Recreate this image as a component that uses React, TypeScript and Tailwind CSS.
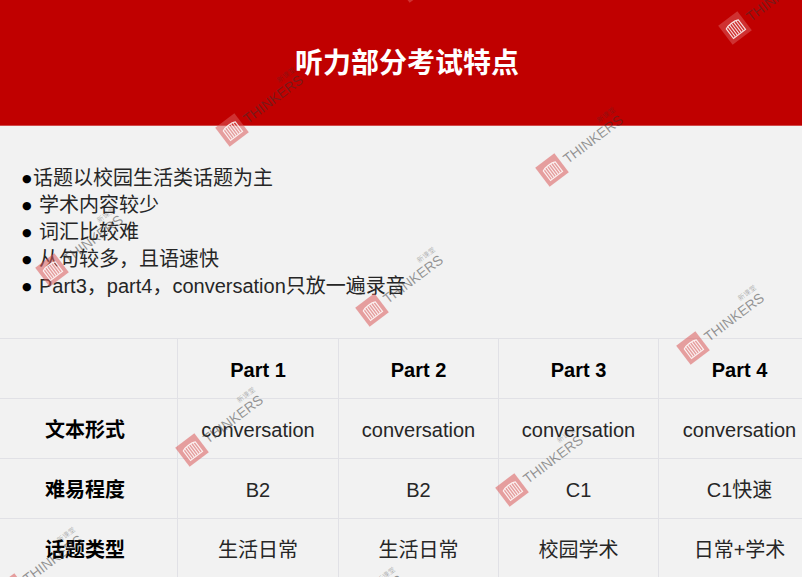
const FONT = "font-['Liberation_Sans','Noto_Sans_CJK_SC',sans-serif]";

const bullets = [
  { text: "话题以校园生活类话题为主", gap: "w-[11px]" },
  { text: "学术内容较少", gap: "w-[17px]" },
  { text: "词汇比较难", gap: "w-[17px]" },
  { text: "从句较多，且语速快", gap: "w-[17px]" },
  { text: "Part3，part4，conversation只放一遍录音", gap: "w-[17px]" },
];

const rows = [
  { label: "", cells: ["Part 1", "Part 2", "Part 3", "Part 4"], head: true },
  { label: "文本形式", cells: ["conversation", "conversation", "conversation", "conversation"] },
  { label: "难易程度", cells: ["B2", "B2", "C1", "C1快速"] },
  { label: "话题类型", cells: ["生活日常", "生活日常", "校园学术", "日常+学术"] },
];

// logo centres of the repeated watermark
const marks = [
  [412, -14], [735, 28], [232, 130], [552, 170], [52, 270],
  [372, 310], [693, 348], [192, 450], [512, 490], [12, 590], [332, 630],
];

function Watermark({ x, y }: { x: number; y: number }) {
  return (
    <div
      className="absolute flex items-center gap-[4px] origin-[12px_12px] rotate-[-37deg]"
      style={{ left: x - 12, top: y - 12 }}
    >
      <div className="h-6 w-6 shrink-0 bg-[rgba(218,90,90,0.55)]">
        <svg viewBox="0 0 24 24" className="h-6 w-6" fill="none" stroke="rgba(255,255,255,0.85)">
          <path d="M4.5 19.5V7.5C8 5.5 16 5.5 19.5 7.5V19.5H4.5Z" strokeWidth="1.2" />
          <path d="M7 7V19M9.5 6.5V19M12 6V19M14.5 6.5V19M17 7V19" strokeWidth="1" />
        </svg>
      </div>
      <div className="relative font-['Liberation_Sans',sans-serif] text-[14px] font-light leading-none text-[rgba(50,50,50,0.5)] whitespace-nowrap">
        THINKERS
        <span className="absolute right-0 top-[-8px] font-['Noto_Sans_CJK_SC',sans-serif] text-[7px] leading-none">
          新课堂
        </span>
      </div>
    </div>
  );
}

export default function App() {
  return (
    <div className={`relative h-[577px] w-[802px] overflow-hidden bg-[#f2f2f2] text-[#262626] ${FONT}`}>
      <header className="flex h-[126px] items-center justify-center border-b border-[#d04a4a] bg-[#c00000] pl-[12px] pt-[2px]">
        <h1 className="text-[28px] font-bold leading-none text-white">听力部分考试特点</h1>
      </header>

      <ul className="ml-[22px] mt-[39px] text-[20px] leading-[27px]">
        {bullets.map((item) => (
          <li key={item.text} className="flex items-center whitespace-nowrap">
            <span className={`${item.gap} shrink-0 font-['DejaVu_Sans',sans-serif] text-[11px] leading-none text-black`}>●</span>
            {item.text}
          </li>
        ))}
      </ul>

      <div className="-ml-[7px] mt-[38px] grid w-[827px] grid-cols-[184px_161px_160px_160px_162px] text-[20px]">
        {rows.map((row) => (
          <div key={row.label || "head"} className="contents">
            <div className="flex h-[60px] items-center justify-center border-t border-[#e1e1e6] pt-[3px] font-bold text-black">
              {row.label}
            </div>
            {row.cells.map((cell, i) => (
              <div
                key={i}
                className={`flex h-[60px] items-center justify-center border-l border-t border-[#e1e1e6] pt-[3px] ${
                  row.head ? "font-bold text-black" : ""
                }`}
              >
                {cell}
              </div>
            ))}
          </div>
        ))}
      </div>

      {marks.map(([x, y]) => (
        <Watermark key={`${x}-${y}`} x={x} y={y} />
      ))}
    </div>
  );
}
